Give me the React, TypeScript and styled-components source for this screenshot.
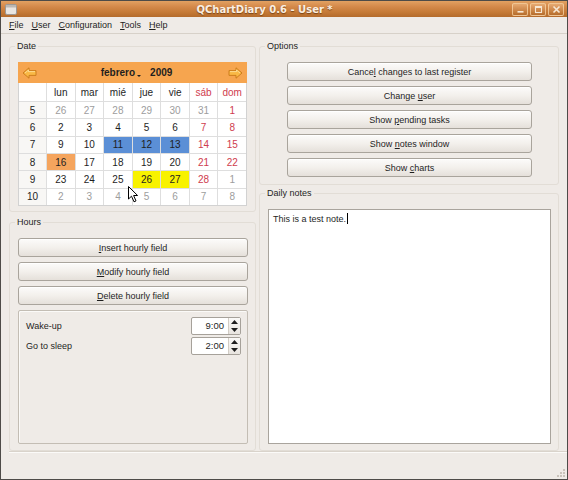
import React from 'react';
import styled, { createGlobalStyle } from 'styled-components';

const GlobalStyle = createGlobalStyle`
  html, body {
    margin: 0;
    padding: 0;
    background: #efebe7;
  }
  body {
    font-family: 'Liberation Sans', Arial, sans-serif;
    font-size: 9px;
    color: #1e1e1e;
  }
`;

type Tone = 'blue' | 'orange' | 'yellow';
type Day = { d: number; other?: boolean; tone?: Tone };

const dayNames = ['lun', 'mar', 'mié', 'jue', 'vie', 'sáb', 'dom'];

const weeks: { n: number; days: Day[] }[] = [
  { n: 5, days: [26, 27, 28, 29, 30, 31].map((d) => ({ d, other: true } as Day)).concat([{ d: 1 }]) },
  { n: 6, days: [2, 3, 4, 5, 6, 7, 8].map((d) => ({ d })) },
  {
    n: 7,
    days: [9, 10, 11, 12, 13, 14, 15].map((d) => ({ d, tone: d >= 11 && d <= 13 ? 'blue' : undefined } as Day)),
  },
  { n: 8, days: [16, 17, 18, 19, 20, 21, 22].map((d) => ({ d, tone: d === 16 ? 'orange' : undefined } as Day)) },
  {
    n: 9,
    days: [23, 24, 25, 26, 27, 28]
      .map((d) => ({ d, tone: d === 26 || d === 27 ? 'yellow' : undefined } as Day))
      .concat([{ d: 1, other: true }]),
  },
  { n: 10, days: [2, 3, 4, 5, 6, 7, 8].map((d) => ({ d, other: true })) },
];

const hourButtons = [
  ['I', 'nsert hourly field'],
  ['M', 'odify hourly field'],
  ['D', 'elete hourly field'],
];

const optionButtons: [string, string, string][] = [
  ['Cance', 'l', ' changes to last register'],
  ['Change ', 'u', 'ser'],
  ['Show ', 'p', 'ending tasks'],
  ['Show ', 'n', 'otes window'],
  ['Show ', 'c', 'harts'],
];

const spins = [
  ['Wake-up', '9:00'],
  ['Go to sleep', '2:00'],
];

const Arrow = ({ dir }: { dir: 'left' | 'right' }) => (
  <svg width="15" height="12" viewBox="0 0 15 12" style={{ transform: dir === 'right' ? 'scaleX(-1)' : undefined }}>
    <path d="M1 6 L7 0.8 L7 3.6 L14 3.6 L14 8.4 L7 8.4 L7 11.2 Z" fill="#f9b845" stroke="#c8781a" strokeWidth="0.9" />
    <path d="M3 6 L6.5 3 L6.5 4.6 L13 4.6" fill="none" stroke="#fde3a6" strokeWidth="0.8" />
  </svg>
);

const App = () => {
  return (
    <>
      <GlobalStyle />
      <Window>
        <TitleBar>
          <svg width="12" height="11" viewBox="0 0 12 11">
            <rect x="0.5" y="0.5" width="11" height="10" rx="1.5" fill="#e9e6e2" stroke="#9c9894" />
            <rect x="1" y="1" width="10" height="2.5" fill="#bdb8b2" />
          </svg>
          <Title>QChartDiary 0.6 - User *</Title>
          <Controls>
            <CtrlButton>
              <svg width="9" height="9" viewBox="0 0 9 9">
                <rect x="1.5" y="6" width="6" height="1.6" fill="#f6e7d4" />
              </svg>
            </CtrlButton>
            <CtrlButton>
              <svg width="9" height="9" viewBox="0 0 9 9">
                <rect x="1.5" y="1.5" width="6" height="6" fill="none" stroke="#f6e7d4" strokeWidth="1.1" />
                <rect x="1.5" y="1.5" width="6" height="1.5" fill="#f6e7d4" />
              </svg>
            </CtrlButton>
            <CtrlButton>
              <svg width="9" height="9" viewBox="0 0 9 9">
                <path d="M1.5 1.5 L7.5 7.5 M7.5 1.5 L1.5 7.5" stroke="#f6e7d4" strokeWidth="1.6" />
              </svg>
            </CtrlButton>
          </Controls>
        </TitleBar>

        <MenuBar>
          {['File', 'User', 'Configuration', 'Tools', 'Help'].map((m) => (
            <MenuItem key={m}>
              <u>{m[0]}</u>
              {m.slice(1)}
            </MenuItem>
          ))}
        </MenuBar>

        <Body>
          <Column $gap={4}>
            <Group $height={172}>
              <Legend>Date</Legend>
              <Calendar>
                <CalHeader>
                  <Arrow dir="left" />
                  <MonthYear>
                    <span>febrero</span>
                    <Caret />
                    <span>2009</span>
                  </MonthYear>
                  <Arrow dir="right" />
                </CalHeader>
                <CalGrid>
                  <Cell />
                  {dayNames.map((n, i) => (
                    <Cell key={n} $weekend={i >= 5}>
                      {n}
                    </Cell>
                  ))}
                  {weeks.map((w) => (
                    <React.Fragment key={w.n}>
                      <Cell $week>{w.n}</Cell>
                      {w.days.map((day, i) => (
                        <Cell key={i} $other={day.other} $weekend={i >= 5} $tone={day.tone}>
                          {day.d}
                        </Cell>
                      ))}
                    </React.Fragment>
                  ))}
                </CalGrid>
                <Pointer width="11" height="17" viewBox="0 0 11 17">
                  <path d="M0.5 0.5 L0.5 13 L3.5 10.2 L6 15.8 L8 14.9 L5.6 9.5 L9.6 9.5 Z" fill="#fff" stroke="#000" strokeWidth="1" />
                </Pointer>
              </Calendar>
            </Group>

            <Group $fill>
              <Legend>Hours</Legend>
              <Stack>
                {hourButtons.map(([k, rest]) => (
                  <PushButton key={rest}>
                    <u>{k}</u>
                    {rest}
                  </PushButton>
                ))}
                <SunkenPanel>
                  {spins.map(([label, value]) => (
                    <SpinRow key={label}>
                      <span>{label}</span>
                      <SpinBox>
                        <SpinValue>{value}</SpinValue>
                        <SpinArrows>
                          <SpinArrow>
                            <svg width="7" height="4" viewBox="0 0 7 4">
                              <path d="M0 4 L3.5 0 L7 4 Z" fill="#1e1e1e" />
                            </svg>
                          </SpinArrow>
                          <SpinArrow>
                            <svg width="7" height="4" viewBox="0 0 7 4">
                              <path d="M0 0 L3.5 4 L7 0 Z" fill="#1e1e1e" />
                            </svg>
                          </SpinArrow>
                        </SpinArrows>
                      </SpinBox>
                    </SpinRow>
                  ))}
                </SunkenPanel>
              </Stack>
            </Group>
          </Column>

          <Column $gap={2}>
            <Group $height={145}>
              <Legend>Options</Legend>
              <Stack $center>
                {optionButtons.map(([a, k, b]) => (
                  <PushButton key={a + k + b} $width={245}>
                    {a}
                    <u>{k}</u>
                    {b}
                  </PushButton>
                ))}
              </Stack>
            </Group>

            <Group $fill>
              <Legend>Daily notes</Legend>
              <NotesBox>
                This is a test note.
                <TextCaret />
              </NotesBox>
            </Group>
          </Column>
        </Body>

        <StatusBar>
          <svg width="10" height="10" viewBox="0 0 10 10">
            <g fill="#c9c3bb">
              <rect x="7" y="1" width="2" height="2" />
              <rect x="4" y="4" width="2" height="2" />
              <rect x="7" y="4" width="2" height="2" />
              <rect x="1" y="7" width="2" height="2" />
              <rect x="4" y="7" width="2" height="2" />
              <rect x="7" y="7" width="2" height="2" />
            </g>
          </svg>
        </StatusBar>
      </Window>
    </>
  );
};

export default App;

const Window = styled.div`
  width: 568px;
  height: 480px;
  box-sizing: border-box;
  border: 1px solid #4e4b48;
  background: #efebe7;
  display: flex;
  flex-direction: column;
  overflow: hidden;
`;

const TitleBar = styled.div`
  height: 16px;
  flex: none;
  display: flex;
  align-items: center;
  padding: 0 3px 0 4px;
  background: linear-gradient(#e2a162 0%, #d4894a 35%, #c57a37 70%, #b46b2c 100%);
`;

const Title = styled.div`
  flex: 1;
  text-align: center;
  font-family: 'DejaVu Sans', 'Liberation Sans', sans-serif;
  font-weight: bold;
  font-size: 10px;
  color: #fbefe2;
  text-shadow: 0 1px 1px rgba(90, 45, 10, 0.7);
`;

const Controls = styled.div`
  display: flex;
  gap: 2px;
`;

const CtrlButton = styled.div`
  width: 16px;
  height: 13px;
  box-sizing: border-box;
  border: 1px solid rgba(250, 215, 170, 0.75);
  border-radius: 2px;
  background: linear-gradient(rgba(255, 220, 180, 0.3), rgba(160, 90, 30, 0.2));
  display: flex;
  align-items: center;
  justify-content: center;
`;

const MenuBar = styled.div`
  height: 16px;
  flex: none;
  display: flex;
  align-items: center;
  padding: 0 4px;
  border-bottom: 1px solid #d7d1c9;
`;

const MenuItem = styled.span`
  padding: 0 4px;
  font-size: 9px;
  color: #1e1e1e;
`;

const Body = styled.div`
  flex: 1;
  display: grid;
  grid-template-columns: 247px 300px;
  column-gap: 3px;
  padding: 6px 9px 0 8px;
  min-height: 0;
`;

const Column = styled.div<{ $gap: number }>`
  display: flex;
  flex-direction: column;
  gap: ${(p) => p.$gap}px;
  min-height: 0;
`;

const Group = styled.fieldset<{ $height?: number; $fill?: boolean }>`
  margin: 0;
  min-width: 0;
  box-sizing: border-box;
  padding: 10px 7px 6px 8px;
  border: 1px solid #e2ddd6;
  border-radius: 3px;
  display: flex;
  flex-direction: column;
  ${(p) => (p.$height ? `height: ${p.$height}px; flex: none;` : '')}
  ${(p) => (p.$fill ? 'flex: 1; min-height: 0;' : '')}
`;

const Legend = styled.legend`
  padding: 0 2px;
  margin-left: -3px;
  line-height: 12px;
  font-size: 9px;
  color: #1e1e1e;
`;

const Calendar = styled.div`
  position: relative;
  width: 229px;
  display: flex;
  flex-direction: column;
`;

const CalHeader = styled.div`
  height: 21px;
  display: flex;
  align-items: center;
  justify-content: space-between;
  padding: 0 4px;
  background: #f6a54f;
`;

const MonthYear = styled.div`
  display: flex;
  align-items: center;
  font-size: 10px;
  font-weight: bold;
  color: #1e1e1e;
  margin-left: 8px;

  span:last-child {
    margin-left: 9px;
  }
`;

const Caret = styled.i`
  width: 0;
  height: 0;
  margin: 6px 0 0 2px;
  border-left: 2px solid transparent;
  border-right: 2px solid transparent;
  border-top: 2px solid #1e1e1e;
`;

const CalGrid = styled.div`
  display: grid;
  grid-template-columns: 27px repeat(7, 1fr);
  grid-template-rows: 18px repeat(6, 1fr);
  height: 122px;
  gap: 1px;
  background: #dedede;
  border: 1px solid #d2d2d2;
  border-top: none;
`;

const toneBg: Record<Tone, string> = {
  blue: '#5b8fd6',
  orange: '#f5a55e',
  yellow: '#f8f200',
};

const Cell = styled.div<{ $week?: boolean; $other?: boolean; $weekend?: boolean; $tone?: Tone }>`
  display: flex;
  align-items: center;
  justify-content: center;
  font-size: 10px;
  background: ${(p) => (p.$tone ? toneBg[p.$tone] : p.$week ? '#f8f7f5' : '#fff')};
  color: ${(p) => (p.$tone ? '#1e1e1e' : p.$other ? '#9d9d9d' : p.$weekend ? '#cf3c4e' : '#1e1e1e')};
`;

const Pointer = styled.svg`
  position: absolute;
  left: 110px;
  top: 124px;
`;

const Stack = styled.div<{ $center?: boolean }>`
  flex: 1;
  display: flex;
  flex-direction: column;
  gap: 5px;
  align-items: ${(p) => (p.$center ? 'center' : 'stretch')};
  min-height: 0;
`;

const PushButton = styled.button<{ $width?: number }>`
  height: 19px;
  flex: none;
  ${(p) => (p.$width ? `width: ${p.$width}px;` : '')}
  padding: 0;
  border: 1px solid #a9a49c;
  border-radius: 3px;
  background: linear-gradient(#fcfbfa 0%, #f3f0ec 50%, #e5e0da 100%);
  box-shadow: inset 0 1px 0 #fff;
  font-family: 'Liberation Sans', Arial, sans-serif;
  font-size: 9px;
  color: #1e1e1e;
`;

const SunkenPanel = styled.div`
  flex: 1;
  border: 1px solid #c3bdb4;
  box-shadow: inset 1px 1px 0 #fbfaf8;
  border-radius: 2px;
  padding: 6px 6px 0 7px;
  display: flex;
  flex-direction: column;
  gap: 2px;
`;

const SpinRow = styled.div`
  display: flex;
  align-items: center;
  justify-content: space-between;
  height: 18px;
  font-size: 9px;
`;

const SpinBox = styled.div`
  display: flex;
  height: 18px;
  width: 50px;
  box-sizing: border-box;
  border: 1px solid #a6a19a;
  border-radius: 2px;
  background: #fff;
`;

const SpinValue = styled.div`
  flex: 1;
  text-align: right;
  padding-right: 4px;
  line-height: 16px;
  font-size: 9.5px;
`;

const SpinArrows = styled.div`
  width: 11px;
  display: flex;
  flex-direction: column;
  border-left: 1px solid #d2cdc6;
  background: linear-gradient(#faf9f7, #e8e4df);
`;

const SpinArrow = styled.div`
  flex: 1;
  display: flex;
  align-items: center;
  justify-content: center;
`;

const NotesBox = styled.div`
  flex: 1;
  background: #fff;
  border: 1px solid #a9a49d;
  padding: 3px 4px;
  font-size: 9px;
  line-height: 12px;
  color: #1e1e1e;
`;

const TextCaret = styled.span`
  display: inline-block;
  width: 1px;
  height: 11px;
  margin-left: 1px;
  background: #000;
  vertical-align: -2px;
`;

const StatusBar = styled.div`
  height: 26px;
  flex: none;
  margin: 0 0 0 8px;
  border-top: 1px solid #d9d3cb;
  box-shadow: inset 0 1px 0 #fbfaf8;
  display: flex;
  align-items: flex-end;
  justify-content: flex-end;
  padding: 0 1px 1px 0;
`;
